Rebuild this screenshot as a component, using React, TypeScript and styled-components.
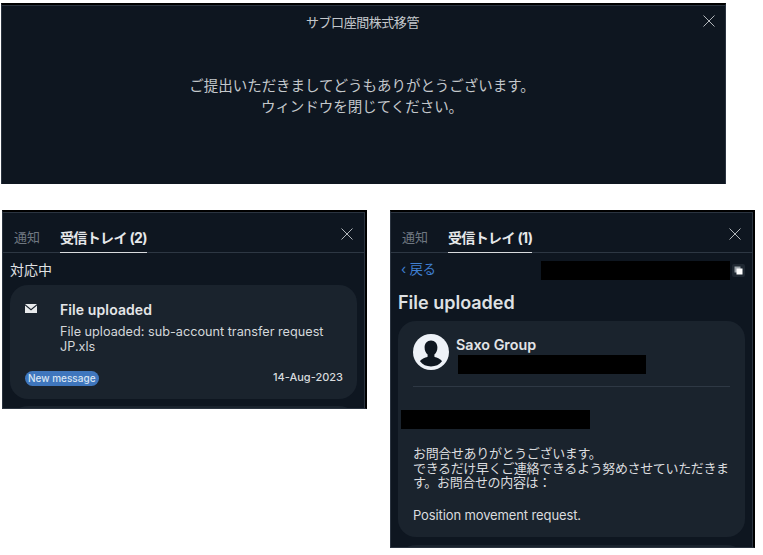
import styled, { createGlobalStyle } from "styled-components";

const GlobalStyle = createGlobalStyle`
  html, body {
    margin: 0;
    padding: 0;
    background: #ffffff;
  }
  body {
    font-family: "Inter", "Noto Sans CJK JP", sans-serif;
  }
`;

const Page = styled.div`
  width: 763px;
  height: 555px;
  overflow: hidden;
  padding: 3px 0 0 1px;
  box-sizing: border-box;
`;

const Dialog = styled.section`
  width: 725px;
  height: 181px;
  box-sizing: border-box;
  background: #0e1620;
  border: 1px solid #2b3440;
  border-top: 2px solid #000;
  border-bottom: none;
  box-shadow: inset 0 1px 0 #2b3440;
  padding-top: 7px;
  display: flex;
  flex-direction: column;
  align-items: center;
  color: #c4c8cc;
`;

const DialogTop = styled.div`
  width: 100%;
  height: 20px;
  position: relative;
`;

const DialogTitle = styled.h1`
  margin: 0;
  padding-right: 2px;
  text-align: center;
  font-size: 13px;
  line-height: 20px;
  font-weight: 400;
  letter-spacing: -0.45px;
`;

const DialogMessage = styled.p`
  margin: 43px 0 0 -3px;
  text-align: center;
  font-size: 14.5px;
  line-height: 21px;
  letter-spacing: -0.03px;
`;

const Lower = styled.div`
  display: flex;
  align-items: flex-start;
  margin-top: 26px;
  padding-left: 1px;
`;

const Panel = styled.section<{ $h: number; $gap?: number }>`
  width: 365px;
  height: ${(p) => p.$h}px;
  margin-left: ${(p) => p.$gap ?? 0}px;
  box-sizing: border-box;
  background: #0e1620;
  border: 1px solid #2b3440;
  border-top: 2px solid #000;
  border-right: 2px solid #000;
  box-shadow: inset 0 1px 0 #2b3440, inset -1px 0 0 #2b3440;
  overflow: hidden;
  color: #d6d9dc;
`;

const TabBar = styled.div`
  height: 41px;
  box-sizing: border-box;
  border-bottom: 1px solid #2d3743;
  display: flex;
  align-items: flex-end;
  padding-left: 11px;
  position: relative;
`;

const Tab = styled.span<{ $active?: boolean }>`
  height: 29px;
  box-sizing: border-box;
  margin-right: ${(p) => (p.$active ? "0" : "20px")};
  margin-bottom: -1px;
  font-size: ${(p) => (p.$active ? "14px" : "13px")};
  line-height: 27px;
  font-weight: ${(p) => (p.$active ? 700 : 400)};
  letter-spacing: ${(p) => (p.$active ? "-0.65px" : "0")};
  color: ${(p) => (p.$active ? "#e6e8ea" : "#6f7780")};
  border-bottom: ${(p) => (p.$active ? "1px solid #d8dbde" : "none")};
  white-space: nowrap;
`;

const CloseIcon = styled.svg<{ $right: number; $top: number }>`
  position: absolute;
  right: ${(p) => p.$right}px;
  top: ${(p) => p.$top}px;
  display: block;
`;

const SectionLabel = styled.div`
  font-size: 14px;
  line-height: 20px;
  margin: 7px 0 0 7px;
  color: #e0e2e4;
`;

const MessageCard = styled.article`
  margin: 5px 0 0 7px;
  width: 347px;
  height: 114px;
  box-sizing: border-box;
  background: #1a232d;
  border-radius: 18px;
  padding: 16px 14px 0 15px;
`;

const PeekCard = styled.div<{ $gap: number }>`
  margin: ${(p) => p.$gap}px 0 0 7px;
  width: 347px;
  height: 40px;
  background: #1a232d;
  border-radius: 18px;
`;

const CardHead = styled.div`
  display: flex;
  align-items: flex-start;
`;

const MailIcon = styled.svg`
  display: block;
  margin-top: 3px;
  width: 12px;
  height: 9px;
  flex: none;
`;

const CardBody = styled.div`
  margin-left: 23px;
  flex: 1;
`;

const CardTitle = styled.div`
  font-size: 14px;
  line-height: 18px;
  font-weight: 600;
  letter-spacing: 0.1px;
  color: #e4e6e8;
`;

const CardText = styled.div`
  margin-top: 5px;
  font-size: 12.7px;
  line-height: 15px;
  color: #d4d7da;
`;

const CardFoot = styled.div`
  display: flex;
  justify-content: space-between;
  align-items: center;
  margin-top: 17px;
`;

const Badge = styled.span`
  background: #3f76bd;
  color: #d8e4f2;
  font-size: 10px;
  line-height: 15px;
  height: 15px;
  padding: 0 3px;
  border-radius: 8px;
  font-weight: 500;
`;

const DateText = styled.span`
  font-size: 11px;
  line-height: 14px;
  font-weight: 500;
  color: #d8dadd;
  margin-top: -3px;
`;

const BackRow = styled.div`
  height: 32px;
  display: flex;
  align-items: center;
  padding: 3px 8px 0 10px;
  box-sizing: border-box;
`;

const BackLink = styled.a`
  width: 140px;
  flex: none;
  margin-top: -4px;
  color: #3f7fd0;
  font-size: 13.5px;
  line-height: 16px;
  white-space: nowrap;
  letter-spacing: -0.3px;
`;

const Redaction = styled.div<{ $w: number }>`
  width: ${(p) => p.$w}px;
  height: 19px;
  background: #000;
  flex: none;
`;

const CopyIcon = styled.svg`
  display: block;
  width: 13px;
  height: 13px;
  margin-left: 2px;
  flex: none;
`;

const DetailTitle = styled.h2`
  margin: 6px 0 0 7px;
  font-size: 18px;
  line-height: 24px;
  font-weight: 600;
  color: #dfe1e3;
`;

const DetailCard = styled.article`
  margin: 6px 0 0 7px;
  width: 347px;
  height: 216px;
  box-sizing: border-box;
  background: #1a232d;
  border-radius: 18px;
  padding: 13px 15px 0 15px;
`;

const Sender = styled.div`
  display: flex;
  align-items: flex-start;
  height: 52px;
  border-bottom: 1px solid #2e3844;
`;

const Avatar = styled.svg`
  display: block;
  width: 36px;
  height: 36px;
  flex: none;
`;

const SenderInfo = styled.div`
  margin-left: 7px;
  padding-top: 2px;
`;

const SenderName = styled.div`
  font-size: 14.3px;
  line-height: 18px;
  font-weight: 600;
  color: #e2e4e6;
`;

const RedactedLine = styled.div`
  margin: 1px 0 0 2px;
`;

const DetailBody = styled.div`
  margin-top: 23px;
  margin-left: -12px;
`;

const DetailText = styled.div`
  margin: 17px 0 0 12px;
  font-size: 13px;
  line-height: 14.5px;
  color: #dadcdf;
  letter-spacing: -0.35px;
`;

const LatinLine = styled.div`
  margin-top: 18px;
  letter-spacing: -0.12px;
`;

const Close = ({ right, top, size }: { right: number; top: number; size: number }) => (
  <CloseIcon $right={right} $top={top} width={size} height={size} viewBox="0 0 12 12">
    <path d="M0.5 0.5 L11.5 11.5 M11.5 0.5 L0.5 11.5" stroke="#c4c8cc" strokeWidth="0.9" fill="none" />
  </CloseIcon>
);

const Tabs = ({ count }: { count: number }) => (
  <TabBar>
    <Tab>通知</Tab>
    <Tab $active>受信トレイ ({count})</Tab>
    <Close right={12} top={16} size={12} />
  </TabBar>
);

export default function App() {
  return (
    <>
      <GlobalStyle />
      <Page>
        <Dialog>
          <DialogTop>
            <DialogTitle>サブ口座間株式移管</DialogTitle>
            <Close right={10} top={3} size={12} />
          </DialogTop>
          <DialogMessage>
            ご提出いただきましてどうもありがとうございます。
            <br />
            ウィンドウを閉じてください。
          </DialogMessage>
        </Dialog>

        <Lower>
          <Panel $h={199}>
            <Tabs count={2} />
            <SectionLabel>対応中</SectionLabel>
            <MessageCard>
              <CardHead>
                <MailIcon viewBox="0 0 12 9">
                  <path d="M0 0 H12 L6 5 Z" fill="#e8eaec" />
                  <path d="M0 1.6 L6 6.4 L12 1.6 V9 H0 Z" fill="#e8eaec" />
                </MailIcon>
                <CardBody>
                  <CardTitle>File uploaded</CardTitle>
                  <CardText>
                    File uploaded: sub-account transfer request
                    <br />
                    JP.xls
                  </CardText>
                </CardBody>
              </CardHead>
              <CardFoot>
                <Badge>New message</Badge>
                <DateText>14-Aug-2023</DateText>
              </CardFoot>
            </MessageCard>
            <PeekCard $gap={7} />
          </Panel>

          <Panel $h={338} $gap={23}>
            <Tabs count={1} />
            <BackRow>
              <BackLink>‹ 戻る</BackLink>
              <Redaction $w={189} />
              <CopyIcon viewBox="0 0 13 13">
                <rect width="13" height="13" rx="2" fill="#1f2832" />
                <rect x="2.5" y="2.5" width="6" height="6" fill="#9aa1a8" />
                <rect x="4.5" y="4.5" width="6" height="6" fill="#ffffff" />
              </CopyIcon>
            </BackRow>
            <DetailTitle>File uploaded</DetailTitle>
            <DetailCard>
              <Sender>
                <Avatar viewBox="0 0 36 36">
                  <circle cx="18" cy="18" r="18" fill="#eef2f8" />
                  <path
                    d="M18 6.5c-3.900 0-6.400 3-6.400 7 0 3 1.200 5.600 3 7v2.200c-2.700 1-6.600 2.300-7.600 4.600 2.500 3.400 6.500 5.200 11 5.200s8.500-1.800 11-5.200c-1-2.300-4.900-3.600-7.600-4.600v-2.200c1.800-1.400 3-4 3-7 0-4-2.500-7-6.400-7z"
                    fill="#0e1620"
                  />
                </Avatar>
                <SenderInfo>
                  <SenderName>Saxo Group</SenderName>
                  <RedactedLine>
                    <Redaction $w={188} />
                  </RedactedLine>
                </SenderInfo>
              </Sender>
              <DetailBody>
                <Redaction $w={189} />
                <DetailText>
                  お問合せありがとうございます。
                  <br />
                  できるだけ早くご連絡できるよう努めさせていただきます。お問合せの内容は：
                  <LatinLine>Position movement request.</LatinLine>
                </DetailText>
              </DetailBody>
            </DetailCard>
            <PeekCard $gap={8} />
          </Panel>
        </Lower>
      </Page>
    </>
  );
}
